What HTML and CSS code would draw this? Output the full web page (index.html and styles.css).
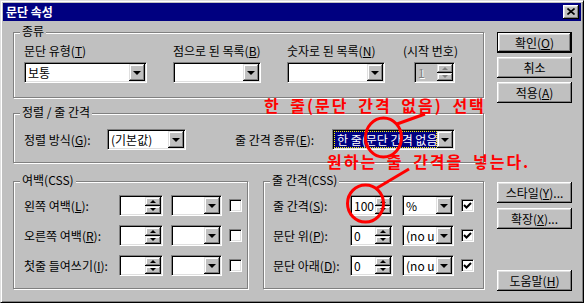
FILE: index.html
```html
<!doctype html>
<html>

<head>
	<meta charset="utf-8">
	<title>문단 속성</title>
	<link rel="stylesheet" href="styles.css">
</head>

<body>
	<div class="dialog">
		<div class="titlebar">
			<span class="title">문단 속성</span>
			<span class="close">
				<svg width="8" height="7" viewBox="0 0 8 7"><path d="M0.5 0.5L7.5 6.5M7.5 0.5L0.5 6.5" stroke="#000" stroke-width="1.6" fill="none"/></svg>
			</span>
		</div>
		<div class="content">
			<div class="left">
				<!-- 종류 -->
				<div class="group g-kind">
					<span class="legend">종류</span>
					<div class="cols">
						<div class="col col-type">
							<div class="lbl">문단 유형(<u>T</u>)</div>
							<div class="field w-type"><span class="val">보통</span><span class="drop"><i class="tri"></i></span></div>
						</div>
						<div class="col col-bullet">
							<div class="lbl">점으로 된 목록(<u>B</u>)</div>
							<div class="field w-bullet"><span class="val"></span><span class="drop"><i class="tri"></i></span></div>
						</div>
						<div class="col col-num">
							<div class="lbl">숫자로 된 목록(<u>N</u>)</div>
							<div class="field w-num"><span class="val"></span><span class="drop"><i class="tri"></i></span></div>
						</div>
						<div class="col">
							<div class="lbl">(시작 번호)</div>
							<div class="field spin w-start disabled">
								<span class="val">1</span>
								<span class="arrows"><span class="arr"><i class="up"></i></span><span class="arr"><i class="dn"></i></span></span>
							</div>
						</div>
					</div>
				</div>

				<!-- 정렬 / 줄 간격 -->
				<div class="group g-align">
					<span class="legend">정렬 / 줄 간격</span>
					<div class="frow">
						<span class="flbl lbl-g">정렬 방식(<u>G</u>):</span>
						<div class="field w-def"><span class="val">(기본값)</span><span class="drop"><i class="tri"></i></span></div>
						<span class="flbl lbl-e">줄 간격 종류(<u>E</u>):</span>
						<div class="field w-kind"><span class="val sel">한 줄(문단 간격 없음)</span><span class="drop"><i class="tri"></i></span></div>
					</div>
				</div>

				<div class="bottom">
					<!-- 여백 -->
					<div class="group g-margin">
						<span class="legend">여백(CSS)</span>
						<div class="frow">
							<span class="flbl">왼쪽 여백(<u>L</u>):</span>
							<div class="field spin"><span class="val"></span><span class="arrows"><span class="arr"><i class="up"></i></span><span class="arr"><i class="dn"></i></span></span></div>
							<div class="field unit"><span class="val"></span><span class="drop"><i class="tri"></i></span></div>
							<span class="chk"></span>
						</div>
						<div class="frow">
							<span class="flbl">오른쪽 여백(<u>R</u>):</span>
							<div class="field spin"><span class="val"></span><span class="arrows"><span class="arr"><i class="up"></i></span><span class="arr"><i class="dn"></i></span></span></div>
							<div class="field unit"><span class="val"></span><span class="drop"><i class="tri"></i></span></div>
							<span class="chk"></span>
						</div>
						<div class="frow">
							<span class="flbl">첫줄 들여쓰기(<u>I</u>):</span>
							<div class="field spin"><span class="val"></span><span class="arrows"><span class="arr"><i class="up"></i></span><span class="arr"><i class="dn"></i></span></span></div>
							<div class="field unit"><span class="val"></span><span class="drop"><i class="tri"></i></span></div>
							<span class="chk"></span>
						</div>
					</div>

					<!-- 줄 간격 -->
					<div class="group g-line">
						<span class="legend">줄 간격(CSS)</span>
						<div class="frow">
							<span class="flbl">줄 간격(<u>S</u>):</span>
							<div class="field spin"><span class="val">100</span><span class="arrows"><span class="arr"><i class="up"></i></span><span class="arr"><i class="dn"></i></span></span></div>
							<div class="field unit"><span class="val">%</span><span class="drop"><i class="tri"></i></span></div>
							<span class="chk"><svg width="11" height="11" viewBox="0 0 11 11"><path d="M2 5L4.5 7.5L9 3" stroke="#000" stroke-width="2" fill="none"/></svg></span>
						</div>
						<div class="frow">
							<span class="flbl">문단 위(<u>P</u>):</span>
							<div class="field spin"><span class="val">0</span><span class="arrows"><span class="arr"><i class="up"></i></span><span class="arr"><i class="dn"></i></span></span></div>
							<div class="field unit"><span class="val">(no u</span><span class="drop"><i class="tri"></i></span></div>
							<span class="chk"><svg width="11" height="11" viewBox="0 0 11 11"><path d="M2 5L4.5 7.5L9 3" stroke="#000" stroke-width="2" fill="none"/></svg></span>
						</div>
						<div class="frow">
							<span class="flbl">문단 아래(<u>D</u>):</span>
							<div class="field spin"><span class="val">0</span><span class="arrows"><span class="arr"><i class="up"></i></span><span class="arr"><i class="dn"></i></span></span></div>
							<div class="field unit"><span class="val">(no u</span><span class="drop"><i class="tri"></i></span></div>
							<span class="chk"><svg width="11" height="11" viewBox="0 0 11 11"><path d="M2 5L4.5 7.5L9 3" stroke="#000" stroke-width="2" fill="none"/></svg></span>
						</div>
					</div>
				</div>
			</div>

			<div class="right">
				<div class="btn default">확인(<u>O</u>)</div>
				<div class="btn gap4">취소</div>
				<div class="btn gap4">적용(<u>A</u>)</div>
				<div class="btn btn-style">스타일(<u>Y</u>)...</div>
				<div class="btn btn-ext">확장(<u>X</u>)...</div>
				<div class="btn btn-help">도움말(<u>H</u>)</div>
			</div>
		</div>

		<!-- 빨간 설명 -->
		<svg class="marks" width="584" height="303" viewBox="0 0 584 303">
			<ellipse cx="383.5" cy="137.5" rx="18" ry="19.5" stroke="#f00" stroke-width="3" fill="none"/>
			<path d="M397 124L425 114" stroke="#f00" stroke-width="3" fill="none"/>
			<ellipse cx="365.5" cy="203.5" rx="18" ry="18.5" stroke="#f00" stroke-width="3" fill="none"/>
			<path d="M377 188L409 169" stroke="#f00" stroke-width="3" fill="none"/>
		</svg>
		<span class="note note1">한 줄(문단 간격 없음) 선택</span>
		<span class="note note2">원하는 줄 간격을 넣는다.</span>
	</div>
</body>

</html>
```

FILE: styles.css
```css
body {
	margin: 0;
	background: #c0c0c0;
}

.dialog {
	position: relative;
	width: 584px;
	height: 303px;
	box-sizing: border-box;
	padding: 2px;
	background: #c0c0c0;
	border: 1px solid;
	border-color: #dfdfdf #000 #000 #dfdfdf;
	box-shadow: inset 1px 1px #fff, inset -1px -1px #808080;
	font: 12px "Noto Sans CJK KR", sans-serif;
	color: #000;
}

.titlebar {
	height: 18px;
	background: #000080;
	color: #fff;
	display: flex;
	align-items: center;
	justify-content: space-between;
	padding: 0 2px 0 3px;
}

.title {
	font-weight: bold;
	line-height: 18px;
}

.close {
	width: 16px;
	height: 14px;
	box-sizing: border-box;
	background: #c0c0c0;
	box-shadow: inset -1px -1px #000, inset 1px 1px #fff, inset -2px -2px #808080, inset 2px 2px #dfdfdf;
	display: flex;
	align-items: center;
	justify-content: center;
	padding-bottom: 1px;
}

.content {
	display: flex;
	padding: 11px 0 0 10px;
}

.left {
	width: 471px;
}

.right {
	margin-left: 13px;
	display: flex;
	flex-direction: column;
}

/* group box */
.group {
	position: relative;
	box-sizing: border-box;
	border: 1px solid #808080;
	box-shadow: inset 1px 1px #fff, 1px 1px #fff;
}

.legend {
	position: absolute;
	top: -9px;
	left: 6px;
	padding: 0 2px;
	background: #c0c0c0;
	line-height: 14px;
	white-space: nowrap;
}

.g-kind {
	height: 66px;
	padding: 11px 0 0 10px;
}

.cols {
	display: flex;
}

.col-type {
	width: 149px;
}

.col-bullet {
	width: 114px;
}

.col-num {
	width: 116px;
}

.lbl {
	line-height: 14px;
	margin-bottom: 4px;
	white-space: nowrap;
}

.g-align {
	height: 50px;
	margin-top: 15px;
	padding: 15px 0 0 10px;
}

.bottom {
	display: flex;
	margin-top: 18px;
}

.g-margin {
	width: 235px;
	height: 108px;
	padding: 13px 0 0 10px;
}

.g-line {
	width: 221px;
	height: 108px;
	margin-left: 15px;
	padding: 13px 0 0 9px;
}

.frow {
	display: flex;
	align-items: center;
	height: 21px;
	margin-bottom: 9px;
}

.flbl {
	white-space: nowrap;
	flex: none;
}

.g-margin .flbl {
	width: 95px;
}

.g-line .flbl {
	width: 77px;
}

.lbl-g {
	width: 83px;
}

.lbl-e {
	width: 97px;
	margin-left: 49px;
}

/* sunken fields */
.field {
	display: flex;
	height: 21px;
	box-sizing: border-box;
	padding: 1px;
	background: #fff;
	border: 1px solid;
	border-color: #808080 #fff #fff #808080;
	box-shadow: inset 1px 1px #000, inset -1px -1px #dfdfdf;
	flex: none;
}

.val {
	flex: 1;
	min-width: 0;
	padding-left: 2px;
	line-height: 17px;
	white-space: nowrap;
	overflow: hidden;
}

.val.sel {
	background: #000080;
	color: #fff;
	outline: 1px dotted #ffff00;
	outline-offset: -1px;
	padding-left: 3px;
}

.w-type {
	width: 123px;
}

.w-bullet {
	width: 88px;
}

.w-num {
	width: 98px;
}

.w-start {
	width: 41px;
	margin-left: 11px;
}

.w-def {
	width: 79px;
}

.w-kind {
	width: 123px;
}

.g-margin .spin {
	width: 44px;
}

.g-line .spin {
	width: 43px;
}

.g-margin .unit {
	width: 51px;
	margin-left: 8px;
}

.g-line .unit {
	width: 52px;
	margin-left: 9px;
}

.disabled {
	background: #c0c0c0;
}

.disabled .val {
	color: #808080;
	text-shadow: 1px 1px #fff;
}

.drop {
	width: 16px;
	height: 17px;
	flex: none;
	background: #c0c0c0;
	box-shadow: inset -1px -1px #000, inset 1px 1px #dfdfdf, inset -2px -2px #808080, inset 2px 2px #fff;
	display: flex;
	align-items: center;
	justify-content: center;
}

.tri {
	width: 0;
	border: 4px solid transparent;
	border-top-color: #000;
	border-bottom: 0;
	margin-top: 1px;
}

.arrows {
	width: 16px;
	flex: none;
	display: flex;
	flex-direction: column;
}

.arr {
	flex: 1;
	background: #c0c0c0;
	box-shadow: inset -1px -1px #000, inset 1px 1px #dfdfdf, inset -2px -2px #808080, inset 2px 2px #fff;
	display: flex;
	align-items: center;
	justify-content: center;
}

.up {
	width: 0;
	border: 3px solid transparent;
	border-bottom-color: #000;
	border-top: 0;
}

.dn {
	width: 0;
	border: 3px solid transparent;
	border-top-color: #000;
	border-bottom: 0;
}

.disabled .up {
	border-bottom-color: #808080;
}

.disabled .dn {
	border-top-color: #808080;
}

.chk {
	width: 13px;
	height: 13px;
	box-sizing: border-box;
	margin-left: 7px;
	background: #fff;
	border: 1px solid;
	border-color: #808080 #fff #fff #808080;
	box-shadow: inset 1px 1px #000, inset -1px -1px #dfdfdf;
	display: flex;
	align-items: center;
	justify-content: center;
	flex: none;
}

/* buttons */
.btn {
	width: 75px;
	height: 21px;
	box-sizing: border-box;
	background: #c0c0c0;
	box-shadow: inset -1px -1px #000, inset 1px 1px #fff, inset -2px -2px #808080, inset 2px 2px #dfdfdf;
	display: flex;
	align-items: center;
	justify-content: center;
	white-space: nowrap;
}

.btn.default {
	border: 1px solid #000;
}

.gap4 {
	margin-top: 4px;
}

.btn-style {
	margin-top: 79px;
}

.btn-ext {
	margin-top: 5px;
}

.btn-help {
	margin-top: 41px;
}

/* red notes */
.marks {
	position: absolute;
	left: -1px;
	top: -1px;
	pointer-events: none;
}

.note {
	position: absolute;
	color: #f00;
	font-size: 16px;
	font-weight: bold;
	letter-spacing: 2px;
	word-spacing: 4px;
	line-height: 18px;
	white-space: nowrap;
}

.note1 {
	left: 263px;
	top: 95px;
}

.note2 {
	left: 326px;
	top: 151px;
}
```
